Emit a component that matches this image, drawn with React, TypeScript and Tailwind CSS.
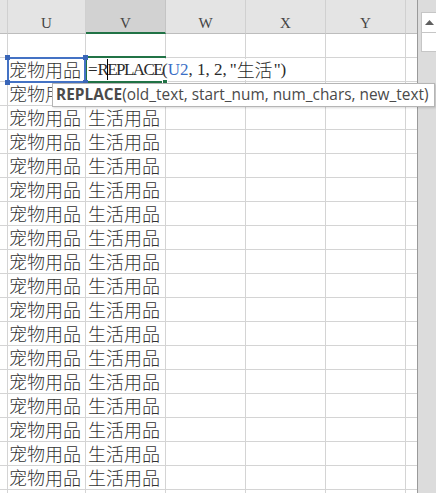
import React from 'react';

const cellFont = { fontFamily: '"Noto Sans CJK SC", "Noto Sans", sans-serif' };
const serif = { fontFamily: '"Liberation Serif", "Noto Sans CJK SC", serif' };

function HeaderRow() {
  return (
    <div className="flex h-[34px] shrink-0">
      <div className="w-[8px] h-full bg-[#e4e4e4] border-r border-b border-[#d0d0d0] border-b-[#bdbdbd]" />
      <div className="w-[78px] h-full bg-[#e4e4e4] border-r border-b border-[#d0d0d0] border-b-[#bdbdbd] flex items-center justify-center pt-[14px] text-[15px] text-[#444]" style={serif}>U</div>
      <div className="w-[80px] h-full bg-[#d2d2d2] border-r border-[#c4c4c4] border-b-2 border-b-[#217346] flex items-center justify-center pt-[14px] text-[15px] text-[#444]" style={serif}>V</div>
      <div className="w-[80px] h-full bg-[#e4e4e4] border-r border-b border-[#d0d0d0] border-b-[#bdbdbd] flex items-center justify-center pt-[14px] text-[15px] text-[#444]" style={serif}>W</div>
      <div className="w-[80px] h-full bg-[#e4e4e4] border-r border-b border-[#d0d0d0] border-b-[#bdbdbd] flex items-center justify-center pt-[14px] text-[15px] text-[#444]" style={serif}>X</div>
      <div className="w-[80px] h-full bg-[#e4e4e4] border-r border-b border-[#d0d0d0] border-b-[#bdbdbd] flex items-center justify-center pt-[14px] text-[15px] text-[#444]" style={serif}>Y</div>
      <div className="flex-1 h-full bg-[#e4e4e4] border-b border-[#bdbdbd]" />
    </div>
  );
}

function Row({ u, v, formula }: { u?: string; v?: string; formula?: boolean }) {
  return (
    <div className="flex h-[24px] shrink-0 border-b border-[#d4d4d4]">
      <div className="w-[8px] h-full border-r border-[#d4d4d4]" />
      <div className="w-[78px] h-full border-r border-[#d4d4d4] flex items-center pl-[1px] text-[18px] font-light text-[#333] whitespace-nowrap" style={cellFont}>{u}</div>
      <div className="w-[80px] h-full border-r border-[#d4d4d4] flex items-center pl-[2px] text-[18px] font-light text-[#333] whitespace-nowrap" style={cellFont}>
        {formula ? (
          <span
            className="relative z-30 h-[21px] inline-flex items-center bg-white pr-[6px] text-[17px] font-normal text-[#2a2a2a]"
            style={serif}
          >
            =<span className="tracking-[-1.6px]">REPLACE</span>(<span className="text-[#3b6fc6]">U2</span>, 1, 2, <span className="ml-[3px]">"</span><span className="text-[18px] font-light" style={cellFont}>生活</span><span className="ml-[1px]">"</span>)
          </span>
        ) : (
          v
        )}
      </div>
      <div className="w-[80px] h-full border-r border-[#d4d4d4]" />
      <div className="w-[80px] h-full border-r border-[#d4d4d4]" />
      <div className="w-[80px] h-full border-r border-[#d4d4d4]" />
      <div className="flex-1 h-full" />
    </div>
  );
}

export default function App() {
  const dataRows = Array.from({ length: 17 });
  return (
    <div className="relative w-[436px] h-[493px] overflow-hidden bg-white flex">
      <div className="flex flex-col w-[417px] shrink-0">
        <HeaderRow />
        <Row />
        <Row u="宠物用品" formula />
        {dataRows.map((_, i) => (
          <Row key={i} u="宠物用品" v="生活用品" />
        ))}
        <Row />
      </div>
      <div className="w-[19px] shrink-0 h-full border-l border-[#9a9a9a] bg-[#dcdcdc] flex flex-col pt-[12px] pl-[3px]">
        <div className="h-[21px] bg-white border border-r-0 border-[#c6c6c6] flex items-center justify-center">
          <svg width="9" height="5" viewBox="0 0 9 5">
            <path d="M0 5 L4.5 0 L9 5 Z" fill="#5f5f5f" />
          </svg>
        </div>
        <div className="h-[19px] bg-white border border-t-0 border-r-0 border-[#c6c6c6]" />
      </div>

      {/* active cell (V2) green border, right edge hidden while editing */}
      <div className="absolute left-[85px] top-[56px] w-[81px] h-[27px] border-2 border-r-0 border-[#217346] z-20 pointer-events-none" />
      <div className="absolute left-[162px] top-[79px] w-[6px] h-[6px] bg-[#217346] border border-white z-30" />

      {/* reference range (U2) blue border */}
      <div className="absolute left-[7px] top-[57px] w-[79px] h-[26px] border-2 border-[#4472c4] z-20 pointer-events-none" />
      <div className="absolute left-[5px] top-[55px] w-[5px] h-[5px] bg-[#3a66b8] z-30" />
      <div className="absolute left-[83px] top-[55px] w-[5px] h-[5px] bg-[#3a66b8] z-30" />
      <div className="absolute left-[5px] top-[80px] w-[5px] h-[5px] bg-[#3a66b8] z-30" />
      <div className="absolute left-[83px] top-[80px] w-[5px] h-[5px] bg-[#3a66b8] z-30" />

      {/* text cursor */}
      <div className="absolute left-[107px] top-[59px] w-[1px] h-[21px] bg-black z-40" />

      {/* function tooltip */}
      <div
        className="absolute left-[52px] top-[83px] w-[383px] h-[24px] bg-white border border-[#b5b5b5] shadow-[1px_1px_2px_rgba(0,0,0,0.15)] z-40 flex items-center pl-[3px] whitespace-nowrap text-[15.4px] text-[#4a4a4a]"
        style={{ fontFamily: '"Open Sans", "Noto Sans", sans-serif' }}
      >
        <span className="font-bold">REPLACE</span>
        <span>(old_text, start_num, num_chars, new_text)</span>
      </div>
    </div>
  );
}
